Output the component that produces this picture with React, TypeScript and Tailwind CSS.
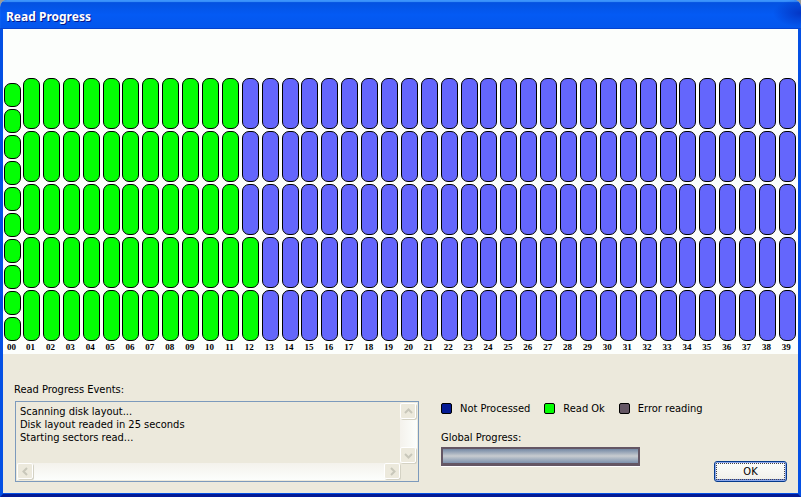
import { ReactNode } from 'react';

const TRACKS = Array.from({ length: 39 }, (_, i) => i + 1);
const ROWS = [0, 1, 2, 3, 4];
const DOUBLE_SECTORS = Array.from({ length: 10 }, (_, i) => i);

const isRead = (track: number, row: number) => track < 12 || (track === 12 && row >= 3);

function Sector({ read, small = false }: { read: boolean; small?: boolean }) {
  return (
    <div
      className={`w-full rounded-[7px] border border-black ${small ? 'h-6' : 'h-[51px]'} ${
        read ? 'bg-[#04fe04]' : 'bg-[#6466fc]'
      }`}
    />
  );
}

function Track({ label, children }: { label: number; children: ReactNode }) {
  return (
    <div className="flex w-[17px] flex-none flex-col justify-end gap-[2px]">
      {children}
      <span className="h-[9px] pr-[2px] text-center font-['Liberation_Serif',serif] text-[9px] leading-[9px] font-bold">
        {String(label).padStart(2, '0')}
      </span>
    </div>
  );
}

const ARROWS = {
  up: 'M1 6 L4.5 2.5 L8 6',
  down: 'M1 3 L4.5 6.5 L8 3',
  left: 'M6 1 L2.5 4.5 L6 8',
  right: 'M3 1 L6.5 4.5 L3 8',
};

function ScrollButton({ direction }: { direction: keyof typeof ARROWS }) {
  return (
    <button
      type="button"
      disabled
      aria-label={`Scroll ${direction}`}
      className="flex size-4 flex-none items-center justify-center rounded-[2px] border border-white bg-[#ece9dc] shadow-[1px_1px_0_#d4d2c4]"
    >
      <svg width="9" height="9" viewBox="0 0 9 9" fill="none" stroke="#c8c7ba" strokeWidth="2">
        <path d={ARROWS[direction]} />
      </svg>
    </button>
  );
}

function LegendItem({ color, children }: { color: string; children: ReactNode }) {
  return (
    <li className="flex items-center gap-2">
      <span className={`size-[11px] rounded-[2px] border border-black ${color}`} />
      {children}
    </li>
  );
}

export default function App() {
  return (
    <div className="min-h-screen bg-[#9c9a94]">
      <main className="flex min-h-screen flex-col overflow-hidden rounded-t-[7px] bg-[#ece9dc] font-['DejaVu_Sans_Condensed','DejaVu_Sans',sans-serif] text-[11px] leading-[13px] text-black">
        <header className="flex-none bg-linear-to-b from-[#0450dc] via-[#045af4] to-[#0456ec] shadow-[inset_0_2px_1px_#3c94fc,inset_0_-1px_0_#0442d0]">
          <div className="flex h-[29px] items-center bg-[radial-gradient(28px_14px_at_100%_45%,#0436c4,transparent)] px-[6px] pt-1">
            <h1 className="font-['Noto_Sans',sans-serif] text-[12px] leading-4 font-bold text-white [text-shadow:1px_1px_0_#04188c]">
              Read Progress
            </h1>
          </div>
        </header>

        <div className="flex grow flex-col border-x-[3px] border-b-[3px] border-[#0450e4] border-b-[#041a94] shadow-[inset_0_-1px_0_#0450e4]">
          <section aria-label="Disk map" className="flex gap-[2px] bg-[#fcfefc] pt-[49px] pr-[2px] pb-[2px] pl-px">
            <Track label={0}>
              {DOUBLE_SECTORS.map((s) => (
                <Sector key={s} read small />
              ))}
            </Track>
            <div className="flex grow justify-between">
              {TRACKS.map((t) => (
                <Track key={t} label={t}>
                  {ROWS.map((r) => (
                    <Sector key={r} read={isRead(t, r)} />
                  ))}
                </Track>
              ))}
            </div>
          </section>

          <section className="flex grow pt-[29px] pr-[11px] pb-3 pl-[11px]">
            <div className="mr-[22px] w-[405px] flex-none">
              <label htmlFor="events" className="block">
                Read Progress Events:
              </label>
              <div className="mt-[5px] ml-px grid h-[81px] grid-cols-[1fr_17px] grid-rows-[1fr_17px] border border-[#7c9abc] p-px">
                <textarea
                  id="events"
                  readOnly
                  className="resize-none overflow-hidden bg-transparent px-[3px] pt-[2px] outline-none"
                  value={'Scanning disk layout...\nDisk layout readed in 25 seconds\nStarting sectors read...'}
                />
                <div className="flex flex-col justify-between bg-linear-to-r from-[#f4f2ec] to-[#fcfefc]">
                  <ScrollButton direction="up" />
                  <ScrollButton direction="down" />
                </div>
                <div className="flex justify-between bg-linear-to-b from-[#f4f2ec] to-[#fcfefc]">
                  <ScrollButton direction="left" />
                  <ScrollButton direction="right" />
                </div>
              </div>
            </div>

            <div className="flex-none pt-[19px]">
              <ul className="flex gap-[14px]">
                <LegendItem color="bg-[#041a94]">Not Processed</LegendItem>
                <LegendItem color="bg-[#04fe04]">Read Ok</LegendItem>
                <LegendItem color="bg-[#645664]">Error reading</LegendItem>
              </ul>
              <p id="global-progress" className="mt-4">
                Global Progress:
              </p>
              <div
                role="progressbar"
                aria-labelledby="global-progress"
                className="mt-[3px] h-[19px] w-[199px] border-2 border-b-[3px] border-[#645664] bg-linear-to-b from-[#7488a4] via-[#c8ccd0] to-[#7c90ac] shadow-[0_1px_0_#fff]"
              />
            </div>

            <div className="flex grow items-end justify-end">
              <button
                type="button"
                className="h-[21px] w-[73px] rounded-[3px] border border-[#043a8c] bg-linear-to-b from-[#fcfefc] to-[#f0efe8] p-px shadow-[inset_0_0_0_1px_#8ca8ec,inset_0_-2px_0_#6482e4]"
              >
                <span className="flex h-full items-center justify-center border border-dotted border-[#444]">OK</span>
              </button>
            </div>
          </section>
        </div>
      </main>
    </div>
  );
}
